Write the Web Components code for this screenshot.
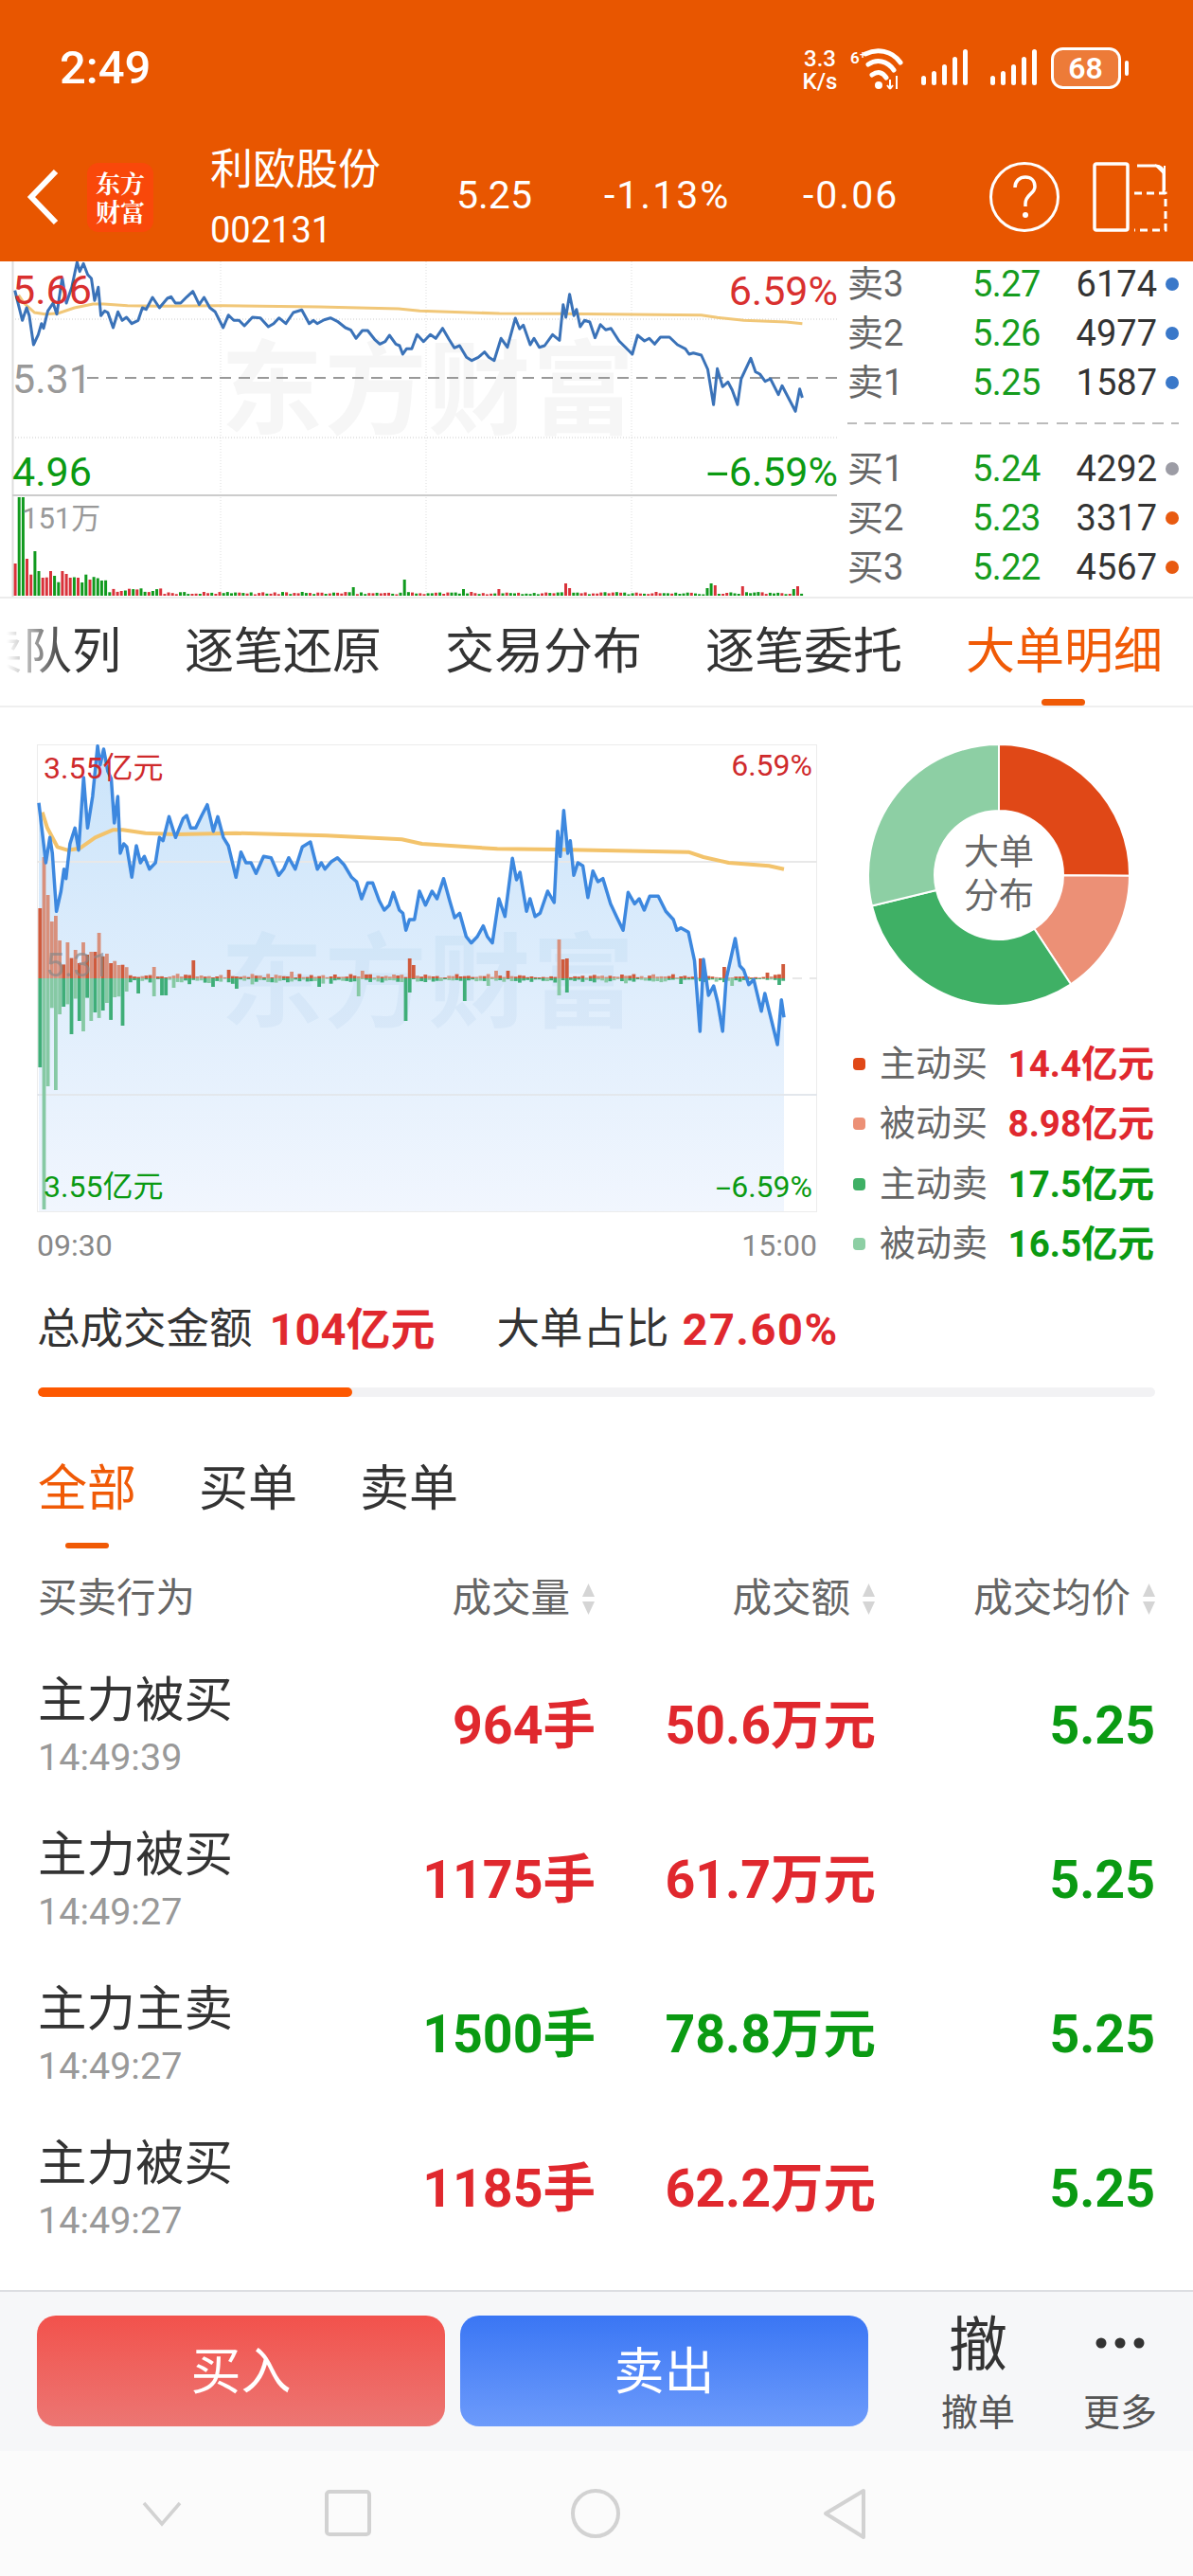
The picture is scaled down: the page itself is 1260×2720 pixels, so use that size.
<!DOCTYPE html>
<html lang="zh"><head><meta charset="utf-8"><title>利欧股份</title>
<style>
html,body{margin:0;padding:0;background:#fff}
body{width:1260px;height:2720px;overflow:hidden;display:flex;flex-direction:column;font-family:Roboto,"Noto Sans CJK SC",sans-serif;color:#333}
trade-list{flex:1}
</style></head><body>
<app-header></app-header>
<quote-panel></quote-panel>
<tab-strip></tab-strip>
<flow-panel></flow-panel>
<flow-summary></flow-summary>
<filter-tabs></filter-tabs>
<trade-list>
  <trade-row name="主力被买" time="14:49:39" vol="964手" amt="50.6万元" price="5.25" tone="up"></trade-row>
  <trade-row name="主力被买" time="14:49:27" vol="1175手" amt="61.7万元" price="5.25" tone="up"></trade-row>
  <trade-row name="主力主卖" time="14:49:27" vol="1500手" amt="78.8万元" price="5.25" tone="down"></trade-row>
  <trade-row name="主力被买" time="14:49:27" vol="1185手" amt="62.2万元" price="5.25" tone="up"></trade-row>
</trade-list>
<action-bar></action-bar>
<system-nav></system-nav>
<script>
const FONT='Roboto,"Noto Sans CJK SC",sans-serif';
const P=[28,110,42,205,50,165,55,190,63,282,72,250,78,215,82,230,90,175,100,150,107,185,117,70,125,150,135,100,145,20,150,50,157,25,165,60,172,72,178,142,185,100,190,190,197,175,203,180,213,228,222,178,230,205,238,195,248,215,260,205,268,165,275,170,287,132,300,165,315,135,322,130,330,150,340,150,352,130,363,113,375,155,384,132,395,165,405,178,420,228,430,188,440,205,450,205,460,222,475,195,490,197,505,225,515,215,525,197,538,215,552,180,568,172,582,215,590,205,597,215,610,203,622,197,635,208,650,228,660,235,670,262,682,237,692,237,705,265,715,280,725,272,733,252,745,280,752,285,758,312,765,295,775,295,785,250,797,272,810,250,820,262,833,230,845,265,855,292,865,285,878,322,888,332,900,322,912,305,920,322,930,332,943,262,955,290,970,198,978,232,985,220,998,282,1005,262,1015,290,1025,285,1040,250,1053,268,1060,155,1065,195,1072,122,1080,190,1085,170,1092,225,1100,205,1110,210,1120,260,1130,218,1140,235,1150,230,1165,270,1178,292,1190,312,1200,252,1213,270,1222,262,1232,280,1243,258,1260,258,1275,282,1290,295,1297,312,1305,308,1320,315,1332,360,1343,472,1350,358,1360,415,1370,400,1378,425,1388,472,1395,390,1413,325,1422,368,1430,375,1440,398,1450,390,1465,440,1472,412,1497,493,1505,422,1510,450];
const A=[35,125,45,150,65,180,85,185,110,182,140,165,175,153,195,153,240,158,300,160,420,158,600,162,750,168,790,175,940,183,1060,184,1320,188,1350,196,1400,205,1480,210,1510,215];
const poly=(arr,fx,fy)=>{let s=[];for(let i=0;i<arr.length;i+=2)s.push(fx(arr[i]).toFixed(1)+','+fy(arr[i+1]).toFixed(1));return s.join(' ')};
const rnd=i=>{const v=Math.sin(i*12.9898+4.1)*43758.5453;return v-Math.floor(v)};
function tpl(el,html){el.attachShadow({mode:'open'}).innerHTML=html}
function def(name,cls){customElements.define(name,cls)}

def('app-header',class extends HTMLElement{connectedCallback(){
let sig='';for(const i of [0,1,2,3,4]){const h=[10,15,22,30,38][i];sig+=`<rect x="${i*11}" y="${40-h}" width="5" height="${h}" rx="2.5" fill="#fff"/>`}
tpl(this,`<style>
:host{display:block;background:#E85600;height:276px;color:#fff;font-family:${FONT}}
.status{height:140px;box-sizing:border-box;display:flex;align-items:flex-start;padding:50px 68px 0 63px}
.time{font-size:49px;font-weight:500;line-height:44px;flex:1}
.speed{width:46px;font-size:24px;line-height:24px;text-align:center;font-weight:500;margin-right:9px;white-space:nowrap}
.wifi{margin-right:19px}.s1{margin-right:24px}.s2{margin-right:15px}
.bat{position:relative;width:82px;height:44px}
.bat b{position:absolute;left:0;top:0;width:73px;height:44px;display:flex;align-items:center;justify-content:center;font-size:32px;font-weight:600;line-height:44px}
.nav{height:136px;display:flex;align-items:center;position:relative}
.back{margin-left:28px}
.logo{margin-left:29px;width:70px;height:73px;border-radius:12px;background:#F9480A;display:flex;align-items:center;justify-content:center;font-family:"Noto Serif CJK SC","Noto Sans CJK SC",sans-serif;font-size:26px;font-weight:700;line-height:30px;text-align:center}
.name{margin-left:60px;width:260px;padding-top:5px}
.name div:first-child{font-size:45px;line-height:56px;margin-top:-5px}
.name div:last-child{font-size:38px;line-height:44px;margin-top:13px}
.q{font-size:41px;line-height:50px;margin-top:-4px}
.q1{width:156px}.q2{width:210px;letter-spacing:2px}.q3{width:196px;letter-spacing:2px}
svg{display:block;flex:none}
</style>
<div class="status"><div class="time">2:49</div>
<div class="speed">3.3<br>K/s</div>
<svg class="wifi" width="56" height="46" viewBox="0 0 56 46"><text x="0" y="17" font-size="17" font-weight="600" fill="#fff" font-family="Roboto">6⁺</text>
<g fill="none" stroke="#fff" stroke-width="5" stroke-linecap="round"><path d="M16 7C28 1 44 3 53 16"/><path d="M19 18C28 12 39 14 46 24"/><path d="M23 29C29 25 34 26 38 32"/></g><circle cx="30" cy="40" r="4" fill="#fff"/><path d="M42 34v10M42 44l-3-4M42 44l3-4M49 30v14" stroke="#fff" stroke-width="2" fill="none"/></svg>
<svg class="s1" width="49" height="42" viewBox="0 0 49 42">${sig}</svg>
<svg class="s2" width="49" height="42" viewBox="0 0 49 42">${sig}</svg>
<div class="bat"><svg width="82" height="44" viewBox="0 0 82 44"><rect x="1.5" y="1.5" width="71" height="41" rx="11" fill="rgba(255,255,255,.22)" stroke="#fff" stroke-width="3"/><rect x="78" y="14" width="4" height="16" rx="2" fill="#fff"/></svg><b>68</b></div>
</div>
<div class="nav">
<svg class="back" width="35" height="60" viewBox="0 0 35 60"><path d="M31 3L5 30l26 27" fill="none" stroke="#fff" stroke-width="6"/></svg>
<div class="logo">东方<br>财富</div>
<div class="name"><div>利欧股份</div><div>002131</div></div>
<div class="q q1">5.25</div><div class="q q2">-1.13%</div><div class="q q3">-0.06</div>
<svg width="76" height="76" viewBox="0 0 76 76"><circle cx="38" cy="38" r="35.5" fill="none" stroke="#fff" stroke-width="3"/><path d="M28 28c0-7 5-11 11-11s10 4 10 10c0 8-10 8-10 18v3" fill="none" stroke="#fff" stroke-width="3.5"/><circle cx="39" cy="57" r="3" fill="#fff"/></svg>
<svg style="margin-left:34px" width="80" height="74" viewBox="0 0 80 74"><rect x="2" y="2" width="35" height="70" rx="2" fill="none" stroke="#fff" stroke-width="3.5"/><path d="M47 4h20a8 8 0 0 1 8 8v20" fill="none" stroke="#fff" stroke-width="3"/><path d="M76 4v26M66 3l10 10" fill="none" stroke="#fff" stroke-width="2"/><path d="M44 33h33v39H44" fill="none" stroke="#fff" stroke-width="3" stroke-dasharray="8 5"/></svg>
</div>`)}});

def('mini-chart',class extends HTMLElement{connectedCallback(){
const fx=d=>d/1.782, fy=d=>d/3-6;
const known={37:[104,0],42:[49,0],28:[34,1],50:[39,1],60:[47,0],70:[26,0],80:[19,1],92:[26,1],103:[21,0],112:[26,1],120:[23,1],130:[19,1],145:[19,1],155:[14,0],190:[16,0],665:[9,0],757:[17,0],870:[7,0],935:[7,1],1060:[13,1],1068:[8,1],1330:[8,0],1338:[13,0],1345:[11,1],1395:[10,1],1500:[10,1],1490:[7,0]};
let bars='';let i=0;
for(let d=26;d<1512;d+=7.4,i++){let h,up=rnd(i)>.5;
 const k=Object.keys(known).find(x=>Math.abs(x-d)<3.8);
 if(k){h=known[k][0];up=!!known[k][1]}
 else if(d<200)h=14+rnd(i+9)*(26-(d-26)/10);
 else if(d<300)h=3+rnd(i+9)*5;
 else h=1.5+rnd(i+9)*2.5;
 bars+=`<rect x="${fx(d).toFixed(1)}" y="${(353-h).toFixed(1)}" width="3" height="${h.toFixed(1)}" fill="${up?'#D9323A':'#119A1E'}"/>`}
const vl=[233,450,667].map(x=>`<line x1="${x}" x2="${x}" y1="0" y2="354" stroke="#ddd" stroke-width="1" stroke-dasharray="1 2"/>`).join('');
const hl=[61,186].map(y=>`<line x1="13" x2="884" y1="${y}" y2="${y}" stroke="#ccc" stroke-width="1" stroke-dasharray="1 2"/>`).join('');
tpl(this,`<style>
:host{display:block;position:relative;width:885px;height:354px;overflow:hidden;font-family:${FONT}}
svg{position:absolute;left:0;top:0}
span{position:absolute;font-size:43px;line-height:44px;white-space:nowrap}
em{font-style:normal;display:inline-block;transform:scaleX(2);transform-origin:100% 50%;margin-left:12px}
.up{color:#D9302F}.dn{color:#0B9A12}.r{right:0}.l{left:13px}
</style>
<svg width="884" height="354" viewBox="0 0 884 354">
<text x="233" y="174" font-size="108" font-weight="700" fill="#f6f6f6" font-family="'Noto Sans CJK SC'" textLength="437">东方财富</text>
${vl}${hl}
<line x1="13.5" x2="13.5" y1="0" y2="354" stroke="#ddd" stroke-width="2"/>
<line x1="13" x2="884" y1="247" y2="247" stroke="#ccc" stroke-width="2"/>
<line x1="92" x2="884" y1="123" y2="123" stroke="#999" stroke-width="2" stroke-dasharray="12 8"/>
<polyline fill="none" stroke="#F1C778" stroke-width="3" points="${poly(A,fx,fy)}"/>
<polyline fill="none" stroke="#3A72B8" stroke-width="3" stroke-linejoin="round" points="${poly(P,fx,fy)}"/>
${bars}
</svg>
<span class="up l" style="top:8px">5.66</span><span class="up r" style="top:9px">6.59%</span>
<span class="l" style="top:102px;color:#999">5.31</span>
<span class="dn l" style="top:200px">4.96</span><span class="dn r" style="top:200px"><em>-</em>6.59%</span>
<span style="left:23px;top:254px;font-size:31px;line-height:36px;color:#999">151万</span>`)}});

def('book-row',class extends HTMLElement{connectedCallback(){
const g=n=>this.getAttribute(n);
tpl(this,`<style>
:host{display:flex;align-items:center;height:52px;font-family:${FONT};font-size:38px;line-height:52px}
.a{width:132px;color:#666}.b{width:105px;color:#169C1E;letter-spacing:-.6px}.c{width:90px;text-align:right;color:#333}
i{width:14px;height:14px;border-radius:50%;margin-left:9px;background:${g('dot')}}
</style><div class="a">${g('label')}</div><div class="b">${g('price')}</div><div class="c">${g('vol')}</div><i></i>`)}});

def('quote-panel',class extends HTMLElement{connectedCallback(){
const B='#3A78C9',O='#E85A10';
const sell=[['卖3','5.27','6174',B],['卖2','5.26','4977',B],['卖1','5.25','1587',B]];
const buy=[['买1','5.24','4292','#9C9CA5'],['买2','5.23','3317',O],['买3','5.22','4567',O]];
const r=a=>a.map(x=>`<book-row label="${x[0]}" price="${x[1]}" vol="${x[2]}" dot="${x[3]}"></book-row>`).join('');
tpl(this,`<style>
:host{display:flex;height:354px;border-bottom:2px solid #ececec;overflow:hidden}
.book{margin-left:10px;width:350px;margin-top:-2px}
.sep{height:0;border-top:2px dashed #bbb;margin:16px 0 21px;width:350px;border-image:repeating-linear-gradient(90deg,#bbb 0 12px,transparent 12px 20px) 2}
</style><mini-chart></mini-chart><div class="book">${r(sell)}<div class="sep"></div>${r(buy)}</div>`)}});

def('tab-strip',class extends HTMLElement{connectedCallback(){
tpl(this,`<style>
:host{display:block;position:relative;height:113px;border-bottom:2px solid #efefef;overflow:hidden;font-family:${FONT}}
.t{display:flex;gap:67px;margin-left:-80px;font-size:52px;line-height:114px;white-space:nowrap;color:#333}
.t span{flex:none}.on{color:#F05A06}
.fade{position:absolute;left:0;top:0;width:70px;height:100%;background:linear-gradient(90deg,#fff 10%,rgba(255,255,255,0))}
.u{position:absolute;left:1100px;bottom:0;width:46px;height:7px;border-radius:4px;background:#F05A06}
</style><div class="t"><span>买卖队列</span><span>逐笔还原</span><span>交易分布</span><span>逐笔委托</span><span class="on">大单明细</span></div><div class="fade"></div><div class="u"></div>`)}});

def('flow-chart',class extends HTMLElement{connectedCallback(){
const X=d=>2+(d-28)/1482*787, Y=d=>247+(d-388)/3*2, BX=d=>d/1.782-39;
const yb=247;
const upK={72:74,78:128,85:88,92:60,103:66,110:40,127:38,140:30,150:38,160:25,172:28,182:48,195:26,205:16,220:14,285:12,358:19,430:9,545:7,680:8,765:21,772:14,930:8,955:8,1047:41,1054:20,1062:21,1315:21,1360:12,1440:6,1468:15};
const dnK={72:94,78:244,85:114,90:73,103:118,110:38,118:30,132:59,145:45,155:56,165:45,178:36,190:34,200:26,212:20,225:50,235:14,260:16,285:19,305:18,320:10,395:9,440:11,595:9,672:19,760:45,770:15,870:24,912:8,1052:18,1060:15,1280:6,1378:8,1465:7};
let light='',dark='',i=0;
for(let d=72;d<1476;d+=7.4,i++){
 const ku=Object.keys(upK).find(x=>Math.abs(x-d)<3.8), kd=Object.keys(dnK).find(x=>Math.abs(x-d)<3.8);
 const base=d<240?22:1+rnd(i+3)*3;
 const u=ku?upK[ku]:base*(.4+rnd(i+11));
 const n=kd?dnK[kd]:base*(.4+rnd(i+23))*(d<240?1.5:1.2);
 const x=BX(d).toFixed(1);
 const ts=(d<220&&i%2)||rnd(i+5)>.6;
 if(ts){light+=`<rect x="${x}" y="${(yb-u).toFixed(1)}" width="3.8" height="${u.toFixed(1)}" fill="#D8907C"/><rect x="${x}" y="${yb}" width="3.8" height="${n.toFixed(1)}" fill="#86C9A4"/>`}
 else{dark+=`<rect x="${x}" y="${(yb-u).toFixed(1)}" width="3.8" height="${u.toFixed(1)}" fill="#CF5A3C"/><rect x="${x}" y="${yb}" width="3.8" height="${n.toFixed(1)}" fill="#3FAE78"/>`}
}
const pts=poly(P,X,Y);
tpl(this,`<style>
:host{display:block;position:relative;width:824px;height:494px;font-family:${FONT}}
svg{position:absolute;left:0;top:0}
span{position:absolute;font-size:32px;line-height:36px;white-space:nowrap}
em{font-style:normal;display:inline-block;transform:scaleX(1.8);transform-origin:100% 50%;margin-left:7px}
.up{color:#CF2A2C}.dn{color:#0A9A12}
</style>
<svg width="824" height="494" viewBox="0 0 824 494"><defs><linearGradient id="f" x1="0" y1="0" x2="0" y2="1"><stop offset="0" stop-color="#CBE4FA"/><stop offset="1" stop-color="#F1F6FE"/></linearGradient></defs>
<rect x=".5" y=".5" width="823" height="493" fill="#fff" stroke="#ececec"/>
<polygon fill="url(#f)" points="${X(28)},493 ${pts} ${X(1510)},493"/>
<text x="194" y="290" font-size="108" font-weight="700" fill="#7FB0DA" fill-opacity=".1" font-family="'Noto Sans CJK SC'" textLength="437">东方财富</text>
<line x1="0" x2="824" y1="124" y2="124" stroke="#e8e8e8" stroke-width="2"/>
<line x1="0" x2="824" y1="370" y2="370" stroke="#e3e7ec" stroke-width="2"/>
<line x1="780" x2="824" y1="247" y2="247" stroke="#e8e8e8" stroke-width="2" stroke-dasharray="10 8"/>
${light}${dark}
<polyline fill="none" stroke="#F3C36B" stroke-width="4" stroke-linejoin="round" points="${poly(A,X,Y)}"/>
<polyline fill="none" stroke="#3D88DF" stroke-width="3.5" stroke-linejoin="round" points="${pts}"/>
<text x="9" y="245" font-size="35" fill="#888" fill-opacity=".7" font-family="Roboto">5.31</text>
</svg>
<span class="up" style="left:7px;top:7px">3.55亿元</span><span class="up" style="right:5px;top:4px">6.59%</span>
<span class="dn" style="left:7px;top:449px">3.55亿元</span><span class="dn" style="right:5px;top:449px"><em>-</em>6.59%</span>`)}});

def('legend-row',class extends HTMLElement{connectedCallback(){
const g=n=>this.getAttribute(n);
tpl(this,`<style>
:host{display:flex;align-items:center;height:63.3px;font-size:38px;line-height:63px;font-family:${FONT}}
i{width:13px;height:13px;border-radius:4px;background:${g('color')};margin-right:15px}
.l{color:#666;width:120px;white-space:nowrap}.v{flex:1;text-align:right;font-weight:700;color:${g('tone')};font-size:38.5px;white-space:nowrap}
</style><i></i><div class="l">${g('label')}</div><div class="v">${g('value')}</div>`)}});

def('donut-chart',class extends HTMLElement{connectedCallback(){
const seg=[[0,90.3,'#E04817'],[90.3,146.6,'#EC9076'],[146.6,256.4,'#3FB065'],[256.4,360,'#8DCFA4']];
const pt=(r,a)=>{const t=a*Math.PI/180;return (138+r*Math.sin(t)).toFixed(2)+' '+(138-r*Math.cos(t)).toFixed(2)};
const p=seg.map(s=>{const L=s[1]-s[0]>180?1:0;return `<path d="M${pt(138,s[0])}A138 138 0 ${L} 1 ${pt(138,s[1])}L${pt(68,s[1])}A68 68 0 ${L} 0 ${pt(68,s[0])}Z" fill="${s[2]}" stroke="#fff" stroke-width="2"/>`}).join('');
tpl(this,`<style>:host{display:block;width:276px;height:276px}svg{display:block}</style>
<svg width="276" height="276" viewBox="0 0 276 276">${p}
<g font-family="'Noto Sans CJK SC'" font-size="37" fill="#666" text-anchor="middle"><text x="138" y="127">大单</text><text x="138" y="173">分布</text></g></svg>`)}});

def('flow-panel',class extends HTMLElement{connectedCallback(){
const R='#E0282E',G='#0A9A12';
tpl(this,`<style>
:host{display:flex;height:594px;box-sizing:border-box;padding:39px 0 0 39px;font-family:${FONT}}
.left{width:824px}
.ax{display:flex;justify-content:space-between;font-size:32px;line-height:46px;color:#888;padding-top:12px}
.right{margin-left:39px;width:317px}
donut-chart{margin-left:15px;margin-bottom:30px}
legend-row{margin-left:-1px}
</style>
<div class="left"><flow-chart></flow-chart><div class="ax"><span>09:30</span><span>15:00</span></div></div>
<div class="right"><donut-chart></donut-chart>
<legend-row color="#E04817" label="主动买" value="14.4亿元" tone="${R}"></legend-row>
<legend-row color="#EC9076" label="被动买" value="8.98亿元" tone="${R}"></legend-row>
<legend-row color="#3FB065" label="主动卖" value="17.5亿元" tone="${G}"></legend-row>
<legend-row color="#8DCFA4" label="被动卖" value="16.5亿元" tone="${G}"></legend-row></div>`)}});

def('flow-summary',class extends HTMLElement{connectedCallback(){
tpl(this,`<style>
:host{display:block;height:134px;padding:0 40px;font-family:${FONT};font-size:45.5px;color:#333}
.t{height:124px;line-height:126px;display:flex;white-space:nowrap;margin-left:-1px}
b{color:#E0282E;font-weight:700;margin-left:18px;font-size:47px}
.pct{letter-spacing:1.5px;margin-left:14px}
.g{margin-left:65px}
.bar{height:10px;border-radius:5px;background:#F2F2F4;overflow:hidden}
.bar i{display:block;width:332px;height:100%;border-radius:5px;background:#FD5800}
</style><div class="t"><span>总成交金额</span><b>104亿元</b><span class="g">大单占比</span><b class="pct">27.60%</b></div><div class="bar"><i></i></div>`)}});

def('filter-tabs',class extends HTMLElement{connectedCallback(){
tpl(this,`<style>
:host{display:block;height:160px;box-sizing:border-box;padding:73px 0 0 40px;font-family:${FONT};position:relative;font-size:52px;line-height:50px}
.r{display:flex;gap:66px}.on{color:#F05A06}
.u{width:46px;height:6px;border-radius:3px;background:#F05A06;margin:31px 0 0 29px}
</style><div class="r"><span class="on">全部</span><span>买单</span><span>卖单</span></div><div class="u"></div>`)}});

def('sort-mark',class extends HTMLElement{connectedCallback(){
tpl(this,`<style>:host{display:block;width:13px;height:33px}svg{display:block}</style><svg width="13" height="33" viewBox="0 0 13 33"><path d="M6.5 0L13 14H0zM0 19h13L6.5 33z" fill="#d5d5d5"/></svg>`)}});

def('trade-list',class extends HTMLElement{connectedCallback(){
tpl(this,`<style>
:host{display:block;font-family:${FONT}}
.h{display:grid;grid-template-columns:300px 288px 296px 296px;height:108px;padding-left:40px;box-sizing:border-box;font-size:41.5px;line-height:106px;color:#666;white-space:nowrap}
.h div{display:flex;align-items:center;justify-content:flex-end;gap:13px;height:106px}
.h div:first-child{justify-content:flex-start}
</style><div class="h"><div>买卖行为</div><div>成交量<sort-mark></sort-mark></div><div>成交额<sort-mark></sort-mark></div><div>成交均价<sort-mark></sort-mark></div></div><slot></slot>`)}});

def('trade-row',class extends HTMLElement{connectedCallback(){
const g=n=>this.getAttribute(n);const c=g('tone')==='up'?'#E0282E':'#0A9A12';
tpl(this,`<style>
:host{display:grid;grid-template-columns:300px 289px 296px 295px;align-items:center;height:163px;padding-left:40px;font-family:${FONT}}
.n{font-size:51.5px;line-height:60px;color:#333;margin-top:-5px;white-space:nowrap}
.t{font-size:39.5px;line-height:44px;color:#999;margin-top:8px}
.v{font-size:55.5px;font-weight:700;text-align:right;line-height:60px;color:${c};white-space:nowrap;margin-top:-4px}
.p{color:#0A9A12}
.f{align-self:start;padding-top:28px}
</style><div class="f"><div class="n">${g('name')}</div><div class="t">${g('time')}</div></div><div class="v">${g('vol')}</div><div class="v">${g('amt')}</div><div class="v p">${g('price')}</div>`)}});

def('action-bar',class extends HTMLElement{connectedCallback(){
tpl(this,`<style>
:host{display:flex;height:170px;box-sizing:border-box;border-top:2px solid #dcdee2;background:#F6F7F9;padding:25px 0 0 39px;font-family:${FONT}}
.b{width:431px;height:117px;border-radius:20px;color:#fff;font-size:53px;line-height:121px;text-align:center}
.buy{background:linear-gradient(#F2524C,#EC7673)}
.sell{background:linear-gradient(#3A76F4,#6D9BFB);margin-left:16px;margin-right:41px}
.tool{width:150px;text-align:center;color:#555;font-size:39px;line-height:44px}
.i{height:81px;font-size:62px;line-height:64px;color:#333;display:block}
svg{display:block;margin:0 auto;padding-top:23px}
</style><div class="b buy">买入</div><div class="b sell">卖出</div>
<div class="tool"><div class="i">撤</div>撤单</div>
<div class="tool"><div class="i"><svg width="52" height="12" viewBox="0 0 52 12"><circle cx="6" cy="6" r="5.5" fill="#333"/><circle cx="26" cy="6" r="5.5" fill="#333"/><circle cx="46" cy="6" r="5.5" fill="#333"/></svg></div>更多</div>`)}});

def('system-nav',class extends HTMLElement{connectedCallback(){
tpl(this,`<style>:host{display:block;height:132px;background:#FBFBFB}svg{display:block}</style>
<svg width="1260" height="132" viewBox="0 0 1260 132" fill="none" stroke="#d2d2d2" stroke-width="4">
<path d="M152 55l19 22 19-22" stroke-width="3.5"/><rect x="345" y="43" width="45" height="45" rx="3"/><circle cx="629" cy="66" r="24"/><path d="M912 42v49L872 66z" stroke-linejoin="round"/></svg>`)}});
</script>
</body></html>
